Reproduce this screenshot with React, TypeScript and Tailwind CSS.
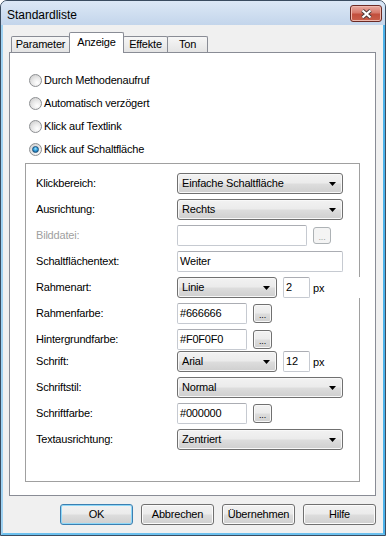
const btnBg =
  "bg-[linear-gradient(#f2f2f2_0%,#ebebeb_48%,#dddddd_52%,#cfcfcf_100%)]";

function Arrow() {
  return (
    <svg width="7" height="4" viewBox="0 0 7 4" className="shrink-0">
      <polygon points="0,0 7,0 3.5,4" fill="#000" />
    </svg>
  );
}

function Combo({ w, text }: { w: string; text: string }) {
  return (
    <div
      className={`${w} h-[21px] shrink-0 flex items-center justify-between pl-[4px] pr-[6px] border border-[#707070] rounded-[3px] ${btnBg} shadow-[inset_0_0_0_1px_#f8f8f8]`}
    >
      <span>{text}</span>
      <Arrow />
    </div>
  );
}

function TextBox({ w, text }: { w: string; text?: string }) {
  return (
    <div
      className={`${w} h-[21px] shrink-0 flex items-center pl-[2px] bg-white border border-[#c6cad1] border-t-[#abadb3] rounded-[2px]`}
    >
      {text}
    </div>
  );
}

function Dots({ disabled }: { disabled?: boolean }) {
  return (
    <div
      className={
        disabled
          ? "ml-[6px] w-[18px] h-[17px] shrink-0 flex items-end justify-center pb-[1px] border border-[#adb2b5] rounded-[3px] bg-[#f4f4f4] text-[#a0a0a0] text-[9px] leading-[9px]"
          : `ml-[6px] w-[19px] h-[19px] shrink-0 flex items-end justify-center pb-[2px] border border-[#707070] rounded-[3px] ${btnBg} shadow-[inset_0_0_0_1px_#f8f8f8] text-[9px] leading-[9px]`
      }
    >
      ...
    </div>
  );
}

function Radio({ label, checked }: { label: string; checked?: boolean }) {
  return (
    <div className="h-[23px] flex items-center gap-[2px] pl-[19px]">
      <div className="w-[13px] h-[13px] rounded-full border border-[#8d8f92] bg-[radial-gradient(circle_at_65%_70%,#ffffff_0%,#e9e9e9_45%,#c6c6c6_100%)] flex items-center justify-center">
        {checked && (
          <div className="w-[7px] h-[7px] rounded-full border border-[#1a4f7a] bg-[radial-gradient(circle_at_50%_35%,#9be3ff_0%,#2f9ad8_50%,#134d7c_100%)]" />
        )}
      </div>
      <span>{label}</span>
    </div>
  );
}

function Row({
  label,
  gap = "mt-[5px]",
  disabled,
  children,
}: {
  label: string;
  gap?: string;
  disabled?: boolean;
  children: React.ReactNode;
}) {
  return (
    <div className={`${gap} h-[21px] flex items-center`}>
      <span className={`w-[141px] shrink-0 ${disabled ? "text-[#a0a0a0]" : ""}`}>{label}</span>
      {children}
    </div>
  );
}

function Button({ label, primary }: { label: string; primary?: boolean }) {
  return (
    <div
      className={`w-[73px] h-[21px] flex items-center justify-center rounded-[3px] border ${btnBg} ${
        primary
          ? "border-[#3c7fb1] shadow-[inset_0_0_0_1px_#8fd8f8]"
          : "border-[#707070] shadow-[inset_0_0_0_1px_#fbfbfb]"
      }`}
    >
      {label}
    </div>
  );
}

export default function App() {
  const tab =
    "-ml-px h-[16px] mb-px flex items-center justify-center border border-b-0 border-[#898c95] rounded-t-[2px] bg-[linear-gradient(#f6f6f6,#e4e4e4)]";
  return (
    <div className="w-[386px] h-[536px] flex flex-col border border-[#3a4c60] rounded-t-[7px] overflow-hidden bg-[#c3d6ed] font-['Liberation_Sans',Arial,sans-serif] text-[11px] tracking-[-0.2px] text-black">
      {/* title bar */}
      <div className="h-[24px] shrink-0 flex items-start justify-between bg-[linear-gradient(#dce8f6,#c3d5eb)]">
        <span className="pl-[6px] pt-[5px] text-[12px] tracking-normal">Standardliste</span>
        <div className="mt-[4px] mr-[3px] w-[32px] h-[17px] flex items-center justify-center rounded-[3px] border border-[#6b2a24] bg-[linear-gradient(#e8aa9f_0%,#d77a6c_45%,#c24f3d_55%,#c9604b_100%)] shadow-[inset_0_0_0_1px_#efb9ae]">
          <svg width="13" height="10" viewBox="0 0 13 10">
            <path d="M2.5 1.5 L10.5 8.5 M10.5 1.5 L2.5 8.5" stroke="#4a3a3a" strokeWidth="4" />
            <path d="M2.5 1.5 L10.5 8.5 M10.5 1.5 L2.5 8.5" stroke="#ffffff" strokeWidth="2.2" />
          </svg>
        </div>
      </div>

      {/* client area */}
      <div className="flex-1 border-x-2 border-b-2 border-l-[#9fd2f2] border-r-[#4cb2ea] border-b-[#6cc0ee]">
        <div className="h-full bg-[#f0f0f0] flex flex-col">
          {/* tabs */}
          <div className="relative z-10 mt-[7px] ml-[8px] -mb-px h-[21px] flex items-end">
            <div className={`${tab} ml-0 w-[59px]`}>Parameter</div>
            <div className="-ml-px w-[55px] h-[21px] flex items-center justify-center pb-[1px] border border-b-0 border-[#898c95] rounded-t-[2px] bg-white">
              Anzeige
            </div>
            <div className={`${tab} w-[45px]`}>Effekte</div>
            <div className={`${tab} w-[41px]`}>Ton</div>
          </div>

          {/* tab panel */}
          <div className="ml-[6px] w-[367px] h-[444px] border border-[#898c95] bg-white pt-[16px]">
            <Radio label="Durch Methodenaufruf" />
            <Radio label="Automatisch verzögert" />
            <Radio label="Klick auf Textlink" />
            <Radio label="Klick auf Schaltfläche" checked />

            <div className="ml-[15px] mt-[2px] w-[335px] h-[319px] border border-[#a0a0a0] pl-[10px] pt-[9px] flex flex-col">
              <Row label="Klickbereich:" gap="">
                <Combo w="w-[166px]" text="Einfache Schaltfläche" />
              </Row>
              <Row label="Ausrichtung:">
                <Combo w="w-[166px]" text="Rechts" />
              </Row>
              <Row label="Bilddatei:" disabled>
                <TextBox w="w-[130px]" />
                <Dots disabled />
              </Row>
              <Row label="Schaltflächentext:">
                <TextBox w="w-[166px]" text="Weiter" />
              </Row>
              <Row label="Rahmenart:">
                <Combo w="w-[100px]" text="Linie" />
                <div className="ml-[6px]">
                  <TextBox w="w-[27px]" text="2" />
                </div>
                <span className="self-start h-[21px] w-[52px] shrink-0 pl-[3px] pt-[3px] bg-white">px</span>
              </Row>
              <Row label="Rahmenfarbe:">
                <TextBox w="w-[70px]" text="#666666" />
                <Dots />
              </Row>
              <Row label="Hintergrundfarbe:">
                <TextBox w="w-[70px]" text="#F0F0F0" />
                <Dots />
              </Row>
              <Row label="Schrift:" gap="mt-[1px]">
                <Combo w="w-[100px]" text="Arial" />
                <div className="ml-[6px]">
                  <TextBox w="w-[27px]" text="12" />
                </div>
                <span className="self-start pl-[3px] pt-[3px]">px</span>
              </Row>
              <Row label="Schriftstil:">
                <Combo w="w-[166px]" text="Normal" />
              </Row>
              <Row label="Schriftfarbe:">
                <TextBox w="w-[70px]" text="#000000" />
                <Dots />
              </Row>
              <Row label="Textausrichtung:">
                <Combo w="w-[166px]" text="Zentriert" />
              </Row>
            </div>
          </div>

          {/* buttons */}
          <div className="mt-[8px] ml-[57px] flex gap-[8px]">
            <Button label="OK" primary />
            <Button label="Abbrechen" />
            <Button label="Übernehmen" />
            <Button label="Hilfe" />
          </div>
        </div>
      </div>
    </div>
  );
}
